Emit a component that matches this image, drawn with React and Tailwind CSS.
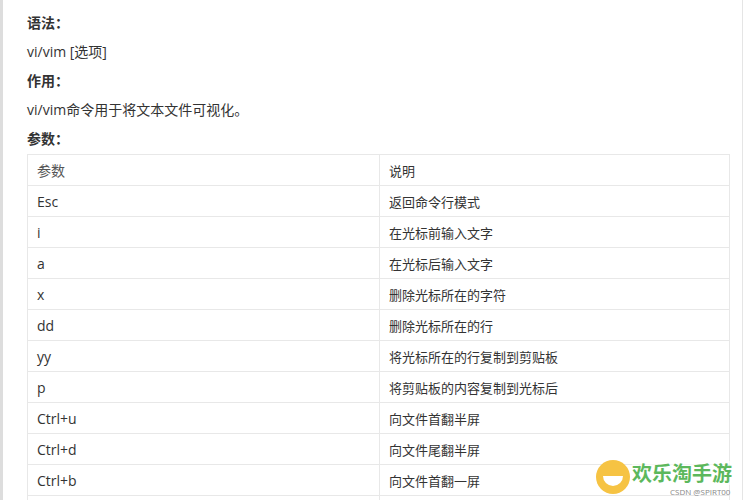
export default function App() {
  const rows = [
    ["参数", "说明"],
    ["Esc", "返回命令行模式"],
    ["i", "在光标前输入文字"],
    ["a", "在光标后输入文字"],
    ["x", "删除光标所在的字符"],
    ["dd", "删除光标所在的行"],
    ["yy", "将光标所在的行复制到剪贴板"],
    ["p", "将剪贴板的内容复制到光标后"],
    ["Ctrl+u", "向文件首翻半屏"],
    ["Ctrl+d", "向文件尾翻半屏"],
    ["Ctrl+b", "向文件首翻一屏"],
    ["Ctrl+f", "向文件尾翻一屏"],
  ];
  const f = { fontFamily: '"Open Sans","Noto Sans CJK SC",sans-serif' };
  return (
    <div className="relative w-[746px] h-[500px] overflow-hidden bg-white text-[#333] text-[14px]" style={f}>
      <div className="absolute left-0 top-0 h-full w-[3px] bg-[#ddd]" />
      <div className="absolute left-[742px] top-0 h-full w-[1px] bg-[#e5e5e5]" />
      <div className="pl-[27px] pt-[10px] pr-[16px]">
        <div className="h-[29px] leading-[25px] font-bold">语法：</div>
        <div className="h-[29px] leading-[25px]">vi/vim [选项]</div>
        <div className="h-[29px] leading-[25px] font-bold">作用：</div>
        <div className="h-[29px] leading-[25px]">vi/vim命令用于将文本文件可视化。</div>
        <div className="h-[28px] leading-[25px] font-bold">参数：</div>
        <div className="w-[703px] border-t border-l border-[#e8e8e8]">
          {rows.map((r, i) => (
            <div key={i} className="flex h-[31px] border-b border-[#e8e8e8]">
              <div className={"w-[352px] border-r border-[#e8e8e8] pl-[9px] leading-[32px] " + (i === 0 ? "text-[#555]" : "")}>{r[0]}</div>
              <div className="flex-1 border-r border-[#e8e8e8] pl-[9px] leading-[32px] text-[13px]">{r[1]}</div>
            </div>
          ))}
        </div>
      </div>
      <div className="absolute left-[596px] top-[460px] w-[34px] h-[34px] rounded-full bg-[#f6c343] flex items-center justify-center">
        <div className="w-[20px] h-[10px] mt-[8px] bg-white rounded-b-full" />
      </div>
      <div className="absolute left-[632px] top-[461px] text-[20px] leading-[24px] font-bold text-[#5cb85c] bg-white/60" style={{ fontFamily: '"Noto Sans CJK SC",sans-serif' }}>欢乐淘手游</div>
      <div className="absolute left-[670px] top-[487px] text-[8px] leading-[10px] text-[#888]">CSDN @SPIRT00</div>
    </div>
  );
}
